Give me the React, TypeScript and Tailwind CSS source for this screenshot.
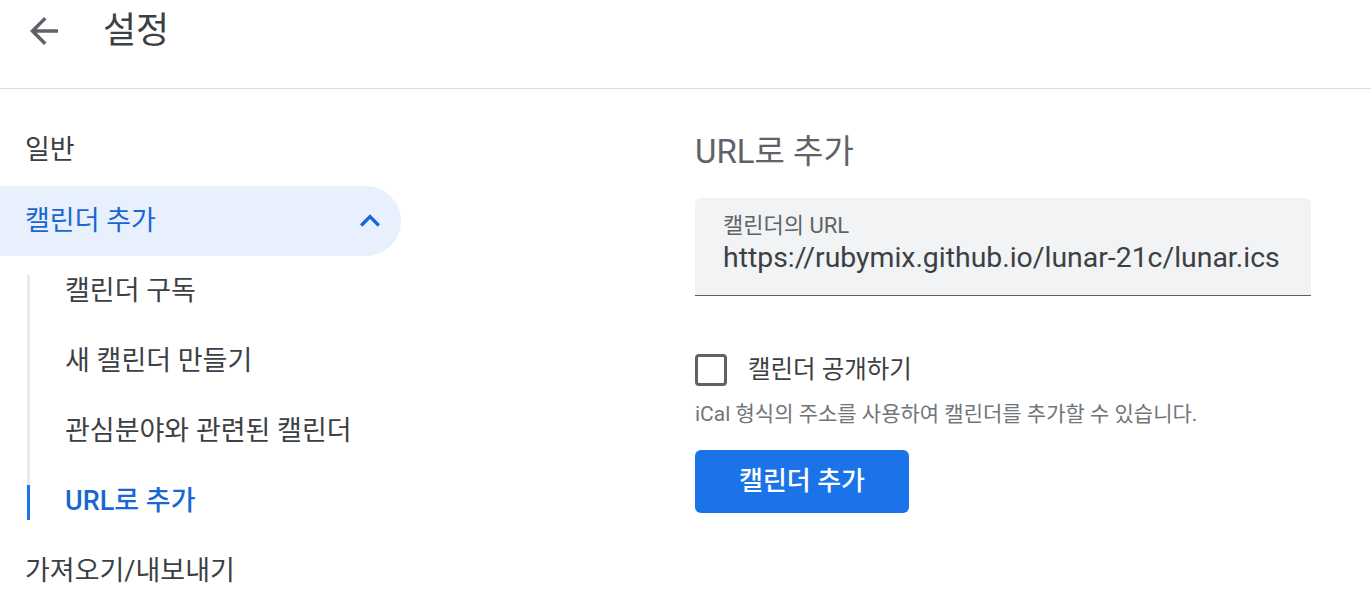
import React from "react";

const font = { fontFamily: "Roboto, 'Noto Sans CJK KR', sans-serif" };

function NavItem({ children }: { children: React.ReactNode }) {
  return (
    <div className="h-[70px] flex items-center pl-[25px] text-[27px] text-[#3c4043]">{children}</div>
  );
}

function SubItem({ children, active }: { children: React.ReactNode; active?: boolean }) {
  return (
    <div
      className={`h-[70px] flex items-center pl-[35px] text-[27px] ${
        active ? "text-[#1967d2] font-medium" : "text-[#3c4043]"
      }`}
    >
      {children}
    </div>
  );
}

export default function App() {
  return (
    <div className="w-[1371px] h-[607px] bg-white overflow-hidden" style={font}>
      <header className="h-[89px] border-b border-[#dadce0] flex items-start">
        <div className="ml-[23px] mt-[10px]">
          <svg width="42" height="42" viewBox="0 0 24 24">
            <path d="M20 11H7.83l5.59-5.59L12 4l-8 8 8 8 1.41-1.41L7.83 13H20v-2z" fill="#5f6368" />
          </svg>
        </div>
        <h1 className="ml-[38px] mt-[9px] text-[36px] leading-[44px] text-[#3c4043] font-normal">설정</h1>
      </header>
      <div className="flex">
        <nav className="w-[401px] pt-[26px]">
          <NavItem>일반</NavItem>
          <div className="mt-[1px] h-[70px] flex items-center justify-between pl-[25px] pr-[11px] bg-[#e8f0fe] rounded-r-full text-[27px] text-[#1967d2]">
            <span>캘린더 추가</span>
            <svg width="40" height="40" viewBox="0 0 24 24">
              <path d="M7.41 15.41L12 10.83l4.59 4.58L18 14l-6-6-6 6z" fill="#1967d2" />
            </svg>
          </div>
          <div className="flex">
            <div className="ml-[27px] pt-[19px] w-[3px] flex flex-col">
              <div className="h-[210px] bg-[#e8eaed]"></div>
              <div className="h-[35px] bg-[#1a73e8]"></div>
            </div>
            <div>
              <SubItem>캘린더 구독</SubItem>
              <SubItem>새 캘린더 만들기</SubItem>
              <SubItem>관심분야와 관련된 캘린더</SubItem>
              <SubItem active>URL로 추가</SubItem>
            </div>
          </div>
          <NavItem>가져오기/내보내기</NavItem>
        </nav>
        <main className="ml-[294px] pt-[43px] w-[616px]">
          <h2 className="text-[33px] text-[#5f6368] font-normal leading-[40px]">URL로 추가</h2>
          <div className="mt-[26px] h-[98px] bg-[#f1f3f4] rounded-t-[6px] border-b border-[#5f6368] px-[28px] pt-[14px]">
            <div className="text-[22px] text-[#5f6368] leading-[28px]">캘린더의 URL</div>
            <div className="text-[28.4px] text-[#3c4043] leading-[36px]">https://rubymix.github.io/lunar-21c/lunar.ics</div>
          </div>
          <label className="mt-[58px] flex items-center gap-[21px]">
            <span className="w-[32px] h-[32px] rounded-[4px] border-[3px] border-[#5f6368] inline-block"></span>
            <span className="text-[24.5px] leading-[32px] text-[#3c4043]">캘린더 공개하기</span>
          </label>
          <p className="mt-[15px] text-[21px] text-[#70757a] leading-[26px]">
            iCal 형식의 주소를 사용하여 캘린더를 추가할 수 있습니다.
          </p>
          <button className="mt-[23px] w-[214px] h-[63px] bg-[#1a73e8] rounded-[6px] text-white text-[26px] font-medium">
            캘린더 추가
          </button>
        </main>
      </div>
    </div>
  );
}
